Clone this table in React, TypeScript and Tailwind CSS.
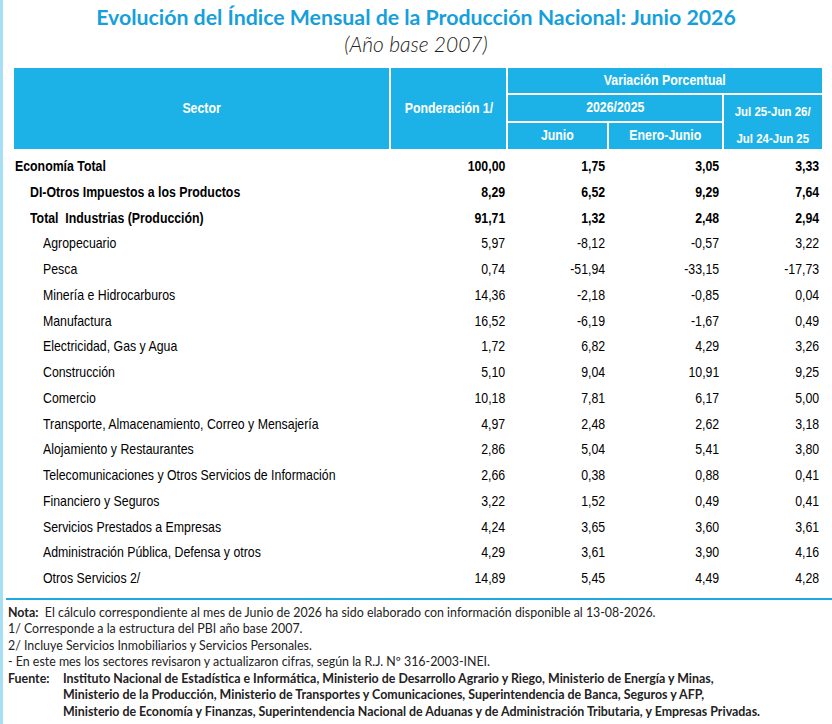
const rows: { label: string; level: 0 | 1 | 2; v: [string, string, string, string] }[] = [
  { label: "Economía Total", level: 0, v: ["100,00", "1,75", "3,05", "3,33"] },
  { label: "DI-Otros Impuestos a los Productos", level: 1, v: ["8,29", "6,52", "9,29", "7,64"] },
  { label: "Total  Industrias (Producción)", level: 1, v: ["91,71", "1,32", "2,48", "2,94"] },
  { label: "Agropecuario", level: 2, v: ["5,97", "-8,12", "-0,57", "3,22"] },
  { label: "Pesca", level: 2, v: ["0,74", "-51,94", "-33,15", "-17,73"] },
  { label: "Minería e Hidrocarburos", level: 2, v: ["14,36", "-2,18", "-0,85", "0,04"] },
  { label: "Manufactura", level: 2, v: ["16,52", "-6,19", "-1,67", "0,49"] },
  { label: "Electricidad, Gas y Agua", level: 2, v: ["1,72", "6,82", "4,29", "3,26"] },
  { label: "Construcción", level: 2, v: ["5,10", "9,04", "10,91", "9,25"] },
  { label: "Comercio", level: 2, v: ["10,18", "7,81", "6,17", "5,00"] },
  { label: "Transporte, Almacenamiento, Correo y Mensajería", level: 2, v: ["4,97", "2,48", "2,62", "3,18"] },
  { label: "Alojamiento y Restaurantes", level: 2, v: ["2,86", "5,04", "5,41", "3,80"] },
  { label: "Telecomunicaciones y Otros Servicios de Información", level: 2, v: ["2,66", "0,38", "0,88", "0,41"] },
  { label: "Financiero y Seguros", level: 2, v: ["3,22", "1,52", "0,49", "0,41"] },
  { label: "Servicios Prestados a Empresas", level: 2, v: ["4,24", "3,65", "3,60", "3,61"] },
  { label: "Administración Pública, Defensa y otros", level: 2, v: ["4,29", "3,61", "3,90", "4,16"] },
  { label: "Otros Servicios 2/", level: 2, v: ["14,89", "5,45", "4,49", "4,28"] },
];

const cols = "grid-cols-[375px_115px_99px_113px_98px]";

// Arial Narrow is not installed: squeeze Liberation Sans horizontally
function N({ children, align = "left" }: { children: React.ReactNode; align?: "left" | "right" | "center" }) {
  const origin = align === "left" ? "origin-left" : align === "right" ? "origin-right" : "origin-center";
  return <span className={`inline-block whitespace-pre scale-x-[0.85] ${origin}`}>{children}</span>;
}

export default function App() {
  return (
    <div className="relative w-[832px] h-[724px] bg-white overflow-hidden">
      {/* left edge strip */}
      <div className="absolute left-0 top-0 h-full w-[3px] bg-[#a6def4]" />

      {/* Title */}
      <div className="pt-[4px] text-center font-['Lato',sans-serif]">
        <h1 className="text-[21.3px] leading-[26px] font-bold text-[#169fdb]">
          Evolución del Índice Mensual de la Producción Nacional: Junio 2026
        </h1>
        <p className="text-[21px] leading-[28px] italic font-light text-[#222]">(Año base 2007)</p>
      </div>

      {/* Table */}
      <div className="ml-[14px] mt-[10px] font-['Liberation_Sans',Arial,sans-serif]">
        <div className={`grid ${cols} grid-rows-[25px_26px_26px] gap-[2px] text-white font-bold text-[14.5px]`}>
          <div className="row-span-3 bg-[#1db2e7] flex items-center justify-center"><N align="center">Sector</N></div>
          <div className="row-span-3 bg-[#1db2e7] flex items-center justify-center"><N align="center">Ponderación 1/</N></div>
          <div className="col-span-3 bg-[#1db2e7] flex items-center justify-center pt-[1px]"><N align="center">Variación Porcentual</N></div>
          <div className="col-span-2 bg-[#1db2e7] flex items-center justify-center"><N align="center">2026/2025</N></div>
          <div className="row-span-2 bg-[#1db2e7] flex flex-col items-center pt-[3px] text-[13.5px] leading-[27px]">
            <N align="center">Jul 25-Jun 26/</N>
            <N align="center">Jul 24-Jun 25</N>
          </div>
          <div className="bg-[#1db2e7] flex items-center justify-center"><N align="center">Junio</N></div>
          <div className="bg-[#1db2e7] flex items-center justify-center"><N align="center">Enero-Junio</N></div>
        </div>

        <div className="mt-[5px] text-[14.5px] text-black">
          {rows.map((r) => (
            <div key={r.label} className={`grid ${cols} gap-x-[2px] h-[25.75px] items-center ${r.level < 2 ? "font-bold" : ""}`}>
              <div className={r.level === 0 ? "pl-[1px]" : r.level === 1 ? "pl-[16px]" : "pl-[29px]"}>
                <N>{r.label}</N>
              </div>
              <div className="text-right pr-[1px]"><N align="right">{r.v[0]}</N></div>
              <div className="text-right pr-[2px]"><N align="right">{r.v[1]}</N></div>
              <div className="text-right pr-[3px]"><N align="right">{r.v[2]}</N></div>
              <div className="text-right pr-[3px]"><N align="right">{r.v[3]}</N></div>
            </div>
          ))}
        </div>
      </div>

      <div className="ml-[6px] mt-[6px] h-[2px] bg-[#1ca8e0]" />

      {/* Notes */}
      <div className="mt-[5px] pl-[8px] text-[12.4px] leading-[16.5px] text-[#222] font-['Lato',sans-serif]">
        <p><span className="font-bold">Nota:</span>{"\u00a0 "}El cálculo correspondiente al mes de Junio de 2026 ha sido elaborado con información disponible al 13-08-2026.</p>
        <p>1/ Corresponde a la estructura del PBI año base 2007.</p>
        <p>2/ Incluye Servicios Inmobiliarios y Servicios Personales.</p>
        <p>- En este mes los sectores revisaron y actualizaron cifras, según la R.J. Nº 316-2003-INEI.</p>
        <div className="flex font-bold">
          <span className="w-[55px] shrink-0">Fuente:</span>
          <p>
            Instituto Nacional de Estadística e Informática, Ministerio de Desarrollo Agrario y Riego, Ministerio de Energía y Minas,<br />
            Ministerio de la Producción, Ministerio de Transportes y Comunicaciones, Superintendencia de Banca, Seguros y AFP,<br />
            Ministerio de Economía y Finanzas, Superintendencia Nacional de Aduanas y de Administración Tributaria, y Empresas Privadas.
          </p>
        </div>
      </div>
    </div>
  );
}
